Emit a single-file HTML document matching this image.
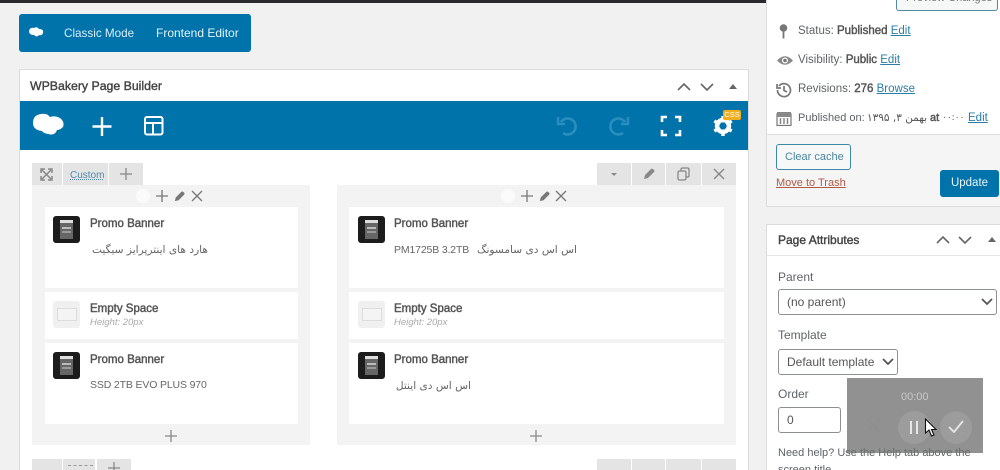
<!DOCTYPE html>
<html><head><meta charset="utf-8">
<style>
html,body{margin:0;padding:0;width:1000px;height:470px;overflow:hidden;background:#f1f1f1}
#w{position:absolute;left:0;top:0;width:1000px;height:470px;overflow:hidden;background:#f1f1f1;font-family:"Liberation Sans","DejaVu Sans",sans-serif;color:#5f6368;font-size:12px;filter:blur(.3px)}
#w div,span.a,svg.a{position:absolute}
.t{white-space:nowrap;line-height:16px}
.b{color:#555;-webkit-text-stroke:.45px #555}
a{color:#2a7da8;text-decoration:underline}
.ctl{background:#e4e4e4}
.card{background:#fff}
.ic{width:27px;height:27px;background:#1c1c1c;border-radius:3px}
.ic:before{content:"";position:absolute;left:7px;top:4px;width:13px;height:19px;background:#666;border:0 solid #ddd;border-top-width:3px;box-sizing:border-box}
.ic:after{content:"";position:absolute;left:9px;top:11px;width:9px;height:2px;background:#bbb;box-shadow:0 4px 0 #999}
.es{width:27px;height:27px;background:#f0f0f0;border-radius:3px}
.es:before{content:"";position:absolute;left:4px;top:7px;width:18px;height:11px;border:1px solid #dcdcdc;background:#f4f4f4}
.h{font-size:11.5px;color:#555;-webkit-text-stroke:.45px #555}
.sub{font-size:9.5px;font-style:italic;color:#aaa}
.tx{font-size:10.5px;color:#666;letter-spacing:-.15px}
.fa{font-family:"DejaVu Sans",sans-serif;font-size:10.6px;letter-spacing:0}
.f{border:1px solid #8c8f94;border-radius:3px;background:#fff;box-sizing:border-box}
</style></head><body><div id="w">
<div style="left:0;top:0;width:1000px;height:2.500px;background:#2b2b2f"></div>

<div style="left:19px;top:14px;width:232px;height:38px;background:#0073aa;border-radius:3px"></div>
<svg class="a" style="left:28px;top:26px" width="17" height="13" viewBox="0 0 17 13"><path d="M1 5Q2 1 6 2Q9 0 11 3Q16 3 15 7Q14 10 11 9Q9 12 6 9Q1 9 1 5Z" fill="#fff"/></svg>
<div class="t" style="left:64px;top:25px;color:#d7edf7;font-size:11.700px;line-height:17px">Classic Mode</div>
<div class="t" style="left:156px;top:25px;color:#e5f3f9;font-size:12px">Frontend Editor</div>

<div style="left:19px;top:69px;width:730px;height:420px;background:#fff;border:1px solid #dcdcde;box-sizing:border-box"></div>
<div class="t" style="left:30px;top:78px;font-size:12.300px;color:#444;-webkit-text-stroke:.4px #444">WPBakery Page Builder</div>
<svg class="a" style="left:676px;top:80px" width="64" height="14" viewBox="0 0 64 14" fill="none" stroke="#666" stroke-width="1.600"><path d="M2 10L8 4L14 10M25 4L31 10L37 4"/><path d="M53 9L57 4L61 9Z" fill="#666" stroke="none"/></svg>
<div style="left:20px;top:101px;width:728px;height:49px;background:#0073aa"></div>
<svg class="a" style="left:32px;top:113px" width="33" height="25" viewBox="0 0 33 25"><path d="M1 10Q1 2 9 1Q15 0 18 4Q23 2 28 5Q33 9 31 14Q28 17 25 17Q23 23 16 21Q11 20 10 18Q1 17 1 10Z" fill="#fff"/></svg>
<svg class="a" style="left:91px;top:115px" width="22" height="22" viewBox="0 0 22 22" stroke="#fff" stroke-width="2.400"><path d="M11 2V21M1.500 11.500H20.500"/></svg>
<svg class="a" style="left:143px;top:115px" width="22" height="22" viewBox="0 0 22 22" fill="none" stroke="#fff" stroke-width="2"><rect x="2" y="2" width="17.500" height="17.500" rx="2"/><path d="M2 8H19.500M10 8V19.500"/></svg>
<svg class="a" style="left:555px;top:114px" width="24" height="23" viewBox="0 0 24 23" fill="none" stroke="#2b8dbd" stroke-width="2.600"><path d="M6 8A8 8 0 1 1 8 19"/><path d="M3 3V10H10"/></svg>
<svg class="a" style="left:607px;top:114px" width="24" height="23" viewBox="0 0 24 23" fill="none" stroke="#2b8dbd" stroke-width="2.600"><path d="M18 8A8 8 0 1 0 16 19"/><path d="M21 3V10H14"/></svg>
<svg class="a" style="left:660px;top:115px" width="22" height="22" viewBox="0 0 22 22" fill="none" stroke="#fff" stroke-width="2.600"><path d="M2 7V2H7M15 2H20V7M20 15V20H15M7 20H2V15"/></svg>
<svg class="a" style="left:712px;top:115px" width="22" height="22" viewBox="0 0 22 22"><circle cx="11" cy="11" r="6.200" fill="none" stroke="#fff" stroke-width="4"/><path d="M11 11L11 1M11 11L11 21M11 11L2.300 6M11 11L19.700 16M11 11L2.300 16M11 11L19.700 6" stroke="#fff" stroke-width="3.400"/><circle cx="11" cy="11" r="3.600" fill="#0073aa"/></svg>
<div style="left:723px;top:110px;width:18px;height:10px;background:#f0ad1e;border-radius:2px;color:#fff;font-size:7.500px;line-height:10px;text-align:center">CSS</div>

<div class="ctl" style="left:32px;top:163px;width:30px;height:22px"></div>
<div class="ctl" style="left:63px;top:163px;width:45px;height:22px"></div>
<div class="ctl" style="left:109px;top:163px;width:34px;height:22px"></div>
<svg class="a" style="left:40px;top:168px" width="13" height="13" viewBox="0 0 13 13" stroke="#888" stroke-width="1.500" fill="none"><path d="M2 2L11 11M11 2L2 11M1 5V1H5M8 1H12V5M12 8V12H8M5 12H1V8"/></svg>
<div class="t" style="left:70px;top:168px;font-size:10px;color:#4f8bae;text-decoration:underline dotted">Custom</div>
<svg class="a" style="left:119px;top:167px" width="14" height="14" stroke="#888" stroke-width="1.300"><path d="M7 1V13M1 7H13"/></svg>

<div class="ctl" style="left:597px;top:163px;width:34px;height:22px"></div>
<div class="ctl" style="left:632px;top:163px;width:33px;height:22px"></div>
<div class="ctl" style="left:666px;top:163px;width:35px;height:22px"></div>
<div class="ctl" style="left:702px;top:163px;width:34px;height:22px"></div>
<svg class="a" style="left:610px;top:171px" width="8" height="6"><path d="M1 2H7L4 5Z" fill="#888"/></svg>
<svg class="a" style="left:642px;top:167px" width="14" height="14" viewBox="0 0 14 14"><path d="M2 12L3 8L9 2Q10 1 12 3Q13 4 12 5L6 11Z" fill="#888"/></svg>
<svg class="a" style="left:677px;top:167px" width="13" height="14" viewBox="0 0 13 14" fill="none" stroke="#888" stroke-width="1.300"><rect x="1" y="4" width="8" height="9" rx="1.500"/><path d="M4 4V2.500Q4 1 5.500 1H10.500Q12 1 12 2.500V8.500Q12 10 10.500 10H9"/></svg>
<svg class="a" style="left:713px;top:168px" width="12" height="12" stroke="#888" stroke-width="1.400"><path d="M1 1L11 11M11 1L1 11"/></svg>

<div style="left:32px;top:185px;width:278px;height:260px;background:#f3f3f3"></div>
<div style="left:337px;top:185px;width:399px;height:260px;background:#f3f3f3"></div>

<div style="left:136px;top:189px;width:14px;height:14px;border-radius:7px;background:#fbfbfb"></div>
<svg class="a" style="left:155px;top:189px" width="14" height="14" stroke="#777" stroke-width="1.300"><path d="M7 1V13M1 7H13"/></svg>
<svg class="a" style="left:173px;top:190px" width="13" height="13" viewBox="0 0 14 14"><path d="M2 12L3 8L9 2Q10 1 12 3Q13 4 12 5L6 11Z" fill="#777"/></svg>
<svg class="a" style="left:191px;top:190px" width="12" height="12" stroke="#777" stroke-width="1.300"><path d="M1 1L11 11M11 1L1 11"/></svg>

<div style="left:501px;top:189px;width:14px;height:14px;border-radius:7px;background:#fbfbfb"></div>
<svg class="a" style="left:520px;top:189px" width="14" height="14" stroke="#777" stroke-width="1.300"><path d="M7 1V13M1 7H13"/></svg>
<svg class="a" style="left:538px;top:190px" width="13" height="13" viewBox="0 0 14 14"><path d="M2 12L3 8L9 2Q10 1 12 3Q13 4 12 5L6 11Z" fill="#777"/></svg>
<svg class="a" style="left:555px;top:190px" width="12" height="12" stroke="#777" stroke-width="1.300"><path d="M1 1L11 11M11 1L1 11"/></svg>

<div class="card" style="left:45px;top:207px;width:253px;height:81px"></div>
<div class="card" style="left:45px;top:292px;width:253px;height:47px"></div>
<div class="card" style="left:45px;top:343px;width:253px;height:81px"></div>
<div class="card" style="left:349px;top:207px;width:375px;height:81px"></div>
<div class="card" style="left:349px;top:292px;width:375px;height:47px"></div>
<div class="card" style="left:349px;top:343px;width:375px;height:81px"></div>

<div class="ic" style="left:53px;top:216px"></div>
<div class="t h" style="left:90px;top:216px">Promo Banner</div>
<div class="t tx fa" style="left:60px;top:242px;direction:rtl;width:148px;text-align:right">هارد های اینترپرایز سیگیت</div>
<div class="es" style="left:53px;top:301px"></div>
<div class="t h" style="left:90px;top:301px">Empty Space</div>
<div class="t sub" style="left:90px;top:315px">Height: 20px</div>
<div class="ic" style="left:358px;top:352px;top:216px"></div>
<div class="t h" style="left:394px;top:216px">Promo Banner</div>
<div class="t tx" style="left:394px;top:242px">PM1725B 3.2TB</div>
<div class="t tx fa" style="left:440px;top:242px;direction:rtl;width:137px;text-align:right">اس اس دی سامسونگ</div>
<div class="es" style="left:358px;top:301px"></div>
<div class="t h" style="left:394px;top:301px">Empty Space</div>
<div class="t sub" style="left:394px;top:315px">Height: 20px</div>
<div class="ic" style="left:53px;top:352px"></div>
<div class="t h" style="left:90px;top:352px">Promo Banner</div>
<div class="t tx" style="left:90px;top:377px">SSD 2TB EVO PLUS 970</div>
<div class="ic" style="left:358px;top:352px"></div>
<div class="t h" style="left:394px;top:352px">Promo Banner</div>
<div class="t tx fa" style="left:374px;top:378px;width:97px;text-align:right;direction:rtl">اس اس دی اینتل</div>

<svg class="a" style="left:164px;top:429px" width="14" height="14" stroke="#888" stroke-width="1.300"><path d="M7 1V13M1 7H13"/></svg>
<svg class="a" style="left:529px;top:429px" width="14" height="14" stroke="#888" stroke-width="1.300"><path d="M7 1V13M1 7H13"/></svg>

<div class="ctl" style="left:32px;top:459px;width:30px;height:11px"></div>
<div class="ctl" style="left:63px;top:459px;width:32px;height:11px"></div>
<div class="ctl" style="left:97px;top:459px;width:34px;height:11px"></div>
<div style="left:68px;top:465px;width:25px;height:0;border-top:1px dashed #999"></div>
<svg class="a" style="left:107px;top:462px" width="14" height="8" stroke="#888" stroke-width="1.300"><path d="M7 0V8M1 6H13"/></svg>
<div class="ctl" style="left:597px;top:459px;width:34px;height:11px"></div>
<div class="ctl" style="left:632px;top:459px;width:33px;height:11px"></div>
<div class="ctl" style="left:666px;top:459px;width:35px;height:11px"></div>
<div class="ctl" style="left:702px;top:459px;width:34px;height:11px"></div>

<!-- Publish box -->
<div style="left:766px;top:0;width:234px;height:207px;background:#fff;border-left:1px solid #dcdcde;border-bottom:1px solid #dcdcde;box-sizing:border-box"></div>
<div style="left:767px;top:134px;width:233px;height:72px;background:#f5f5f5;border-top:1px solid #dcdcde;box-sizing:border-box"></div>
<div style="left:896px;top:-8px;width:102px;height:19px;border:1px solid #4d8aa8;border-radius:3px;box-sizing:border-box;background:#f6f7f7"></div>
<div class="t" style="left:906px;top:-10px;color:#777;font-size:11px">Preview Changes</div>

<svg class="a" style="left:778px;top:23px" width="11" height="16" viewBox="0 0 11 16"><circle cx="5.500" cy="5" r="3.800" fill="#777"/><path d="M5.500 8V15.500" stroke="#777" stroke-width="1.800"/></svg>
<div class="t" style="left:798px;top:23px;font-size:11.500px">Status: <span class="b">Published</span> <a>Edit</a></div>
<svg class="a" style="left:776px;top:54px" width="18" height="13" viewBox="0 0 18 13"><path d="M1 6.500Q9 -2 17 6.500Q9 15 1 6.500Z" fill="#888"/><circle cx="9" cy="6.500" r="3" fill="#fff"/><circle cx="9" cy="6.500" r="1.800" fill="#777"/></svg>
<div class="t" style="left:798px;top:52px;font-size:11.500px">Visibility: <span class="b">Public</span> <a>Edit</a></div>
<svg class="a" style="left:776px;top:82px" width="16" height="16" viewBox="0 0 16 16" fill="none" stroke="#777" stroke-width="1.700"><path d="M3 4A6.500 6.500 0 1 1 1.500 8"/><path d="M1 2V6H5"/><path d="M8 4V8.500L11 10"/></svg>
<div class="t" style="left:798px;top:81px;font-size:11.500px">Revisions: <span class="b">276</span> <a>Browse</a></div>
<svg class="a" style="left:776px;top:111px" width="16" height="15" viewBox="0 0 16 15"><path d="M1 3H15V14.500H1Z" fill="none" stroke="#777" stroke-width="1.200"/><path d="M1 1H15V6H1Z" fill="#888"/><path d="M4.500 7V13M8 7V13M11.500 7V13" stroke="#888" stroke-width="1.500"/></svg>
<div class="t" style="left:798px;top:110px;font-size:11px">Published on:</div>
<div class="t fa" style="left:866px;top:110px;width:62px;text-align:center;font-size:10.500px;color:#555"><span dir="ltr">۱۳۹۵ ,۳ <span dir="rtl">بهمن</span></span></div>
<div class="t b" style="left:930px;top:110px;font-size:11px">at</div>
<div class="t fa" style="left:942px;top:110px;font-size:9px;color:#555">۰۰:۰۰</div>
<div class="t" style="left:968px;top:110px;font-size:11.500px"><a>Edit</a></div>

<div style="left:776px;top:144px;width:75px;height:26px;border:1px solid #3d87a9;border-radius:3px;background:#f6f7f7;box-sizing:border-box"></div>
<div class="t" style="left:785px;top:149px;color:#4d87a3;font-size:11px">Clear cache</div>
<div class="t" style="left:776px;top:175px;color:#b05a45;font-size:11px;text-decoration:underline">Move to Trash</div>
<div style="left:940px;top:170px;width:59px;height:27px;background:#0073aa;border-radius:3px;color:#e8f4fa;font-size:11.500px;line-height:27px;text-align:center">Update</div>

<!-- Attributes -->
<div style="left:766px;top:224px;width:240px;height:260px;background:#fff;border:1px solid #dcdcde;box-sizing:border-box"></div>
<div style="left:767px;top:255px;width:233px;height:1px;background:#e6e6e6"></div>
<div class="t" style="left:778px;top:232px;font-size:12px;color:#444;-webkit-text-stroke:.4px #444">Page Attributes</div>
<svg class="a" style="left:935px;top:233px" width="62" height="14" viewBox="0 0 62 14" fill="none" stroke="#666" stroke-width="1.600"><path d="M2 10L8 4L14 10M24 4L30 10L36 4"/><path d="M53 9L57 4L61 9Z" fill="#666" stroke="none"/></svg>
<div class="t" style="left:778px;top:269px;font-size:12px">Parent</div>
<div class="f" style="left:778px;top:289px;width:219px;height:26px"></div>
<div class="t" style="left:787px;top:294px;font-size:12px;color:#555">(no parent)</div>
<svg class="a" style="left:981px;top:298px" width="12" height="8" fill="none" stroke="#555" stroke-width="1.800"><path d="M1 1L6 6L11 1"/></svg>
<div class="t" style="left:778px;top:327px;font-size:12px">Template</div>
<div class="f" style="left:778px;top:349px;width:120px;height:26px"></div>
<div class="t" style="left:787px;top:354px;font-size:12px;color:#555">Default template</div>
<svg class="a" style="left:882px;top:358px" width="12" height="8" fill="none" stroke="#555" stroke-width="1.800"><path d="M1 1L6 6L11 1"/></svg>
<div class="t" style="left:778px;top:386px;font-size:12px">Order</div>
<div class="f" style="left:778px;top:407px;width:63px;height:26px"></div>
<div class="t" style="left:787px;top:412px;font-size:12px;color:#555">0</div>
<div class="t" style="left:778px;top:445px;font-size:11px">Need help? Use the Help tab above the</div>
<div class="t" style="left:778px;top:462px;font-size:11px">screen title.</div>

<!-- Recorder overlay -->
<div style="left:847px;top:378px;width:136px;height:75px;background:rgba(108,108,108,.75)"></div>
<div class="t" style="left:901px;top:389px;color:#c8c8c8;font-size:11px">00:00</div>
<svg class="a" style="left:865px;top:417px" width="17" height="17" stroke="#8f8f8f" stroke-width="2.500"><path d="M2 2L15 15M15 2L2 15"/></svg>
<div style="left:898px;top:411px;width:33px;height:33px;border-radius:50%;background:#9c9c9c"></div>
<div style="left:910px;top:421px;width:2px;height:13px;background:#e6e6e6"></div>
<div style="left:916px;top:421px;width:2px;height:13px;background:#e6e6e6"></div>
<div style="left:940px;top:411px;width:32px;height:33px;border-radius:50%;background:#9c9c9c"></div>
<svg class="a" style="left:948px;top:420px" width="16" height="13" fill="none" stroke="#e8e8e8" stroke-width="1.800"><path d="M1 7L6 12L15 1"/></svg>
<svg class="a" style="left:924px;top:418px" width="13" height="19" viewBox="0 0 13 19"><path d="M1.500 1V15L5 12L7.500 18L10 17L7.500 11.500H12Z" fill="#fff" stroke="#111" stroke-width="1.100"/></svg>
</div></body></html>
